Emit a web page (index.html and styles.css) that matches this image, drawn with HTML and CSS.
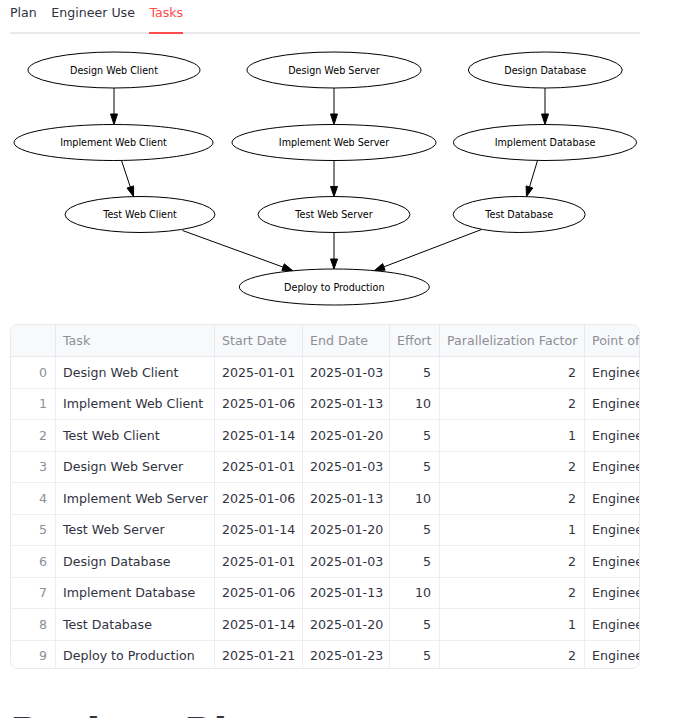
FILE: index.html
```html
<!DOCTYPE html>
<html>
<head>
<meta charset="utf-8">
<link rel="stylesheet" href="styles.css">
</head>
<body>
<div class="page">
  <div class="tabs">
    <div class="tab">Plan</div>
    <div class="tab">Engineer Use</div>
    <div class="tab active">Tasks</div>
  </div>

  <svg class="graph" width="630" height="290" viewBox="10 34 630 290" xmlns="http://www.w3.org/2000/svg">
    <g class="nodes">
      <ellipse cx="114" cy="70" rx="86" ry="18"/>
      <ellipse cx="334" cy="70" rx="87" ry="18"/>
      <ellipse cx="545.3" cy="70" rx="77" ry="18"/>
      <ellipse cx="113.5" cy="142.5" rx="99.5" ry="18"/>
      <ellipse cx="334" cy="142.5" rx="102" ry="18"/>
      <ellipse cx="545" cy="142.5" rx="91.5" ry="18"/>
      <ellipse cx="140" cy="214.5" rx="75" ry="18"/>
      <ellipse cx="334" cy="214.5" rx="76" ry="18"/>
      <ellipse cx="519.2" cy="214.5" rx="66" ry="18"/>
      <ellipse cx="334.3" cy="287" rx="95" ry="18"/>
    </g>
    <g class="edges">
      <line x1="114" y1="88" x2="114" y2="114"/>
      <polygon points="114,124.5 110.5,114 117.5,114"/>
      <line x1="334" y1="88" x2="334" y2="114"/>
      <polygon points="334,124.5 330.5,114 337.5,114"/>
      <line x1="545" y1="88" x2="545" y2="114"/>
      <polygon points="545,124.5 541.5,114 548.5,114"/>
      <line x1="121.5" y1="160.5" x2="130.3" y2="187"/>
      <polygon points="133.5,196.5 133.6,185.9 127,188.1"/>
      <line x1="334" y1="160.5" x2="334" y2="186.5"/>
      <polygon points="334,196.5 330.5,186.5 337.5,186.5"/>
      <line x1="537.5" y1="160.5" x2="529.5" y2="187"/>
      <polygon points="526.5,196.5 532.8,188 526.1,185.9"/>
      <line x1="182.5" y1="230.5" x2="283.1" y2="267.1"/>
      <polygon points="292.5,270.5 281.9,270.4 284.3,263.8"/>
      <line x1="334" y1="232.5" x2="334" y2="259"/>
      <polygon points="334,269 330.5,259 337.5,259"/>
      <line x1="481.5" y1="229.5" x2="383.8" y2="266.9"/>
      <polygon points="374.5,270.5 382.6,263.6 385.1,270.2"/>
    </g>
    <g class="labels">
      <text x="114" y="73.5">Design Web Client</text>
      <text x="334" y="73.5">Design Web Server</text>
      <text x="545.3" y="73.5">Design Database</text>
      <text x="113.5" y="146">Implement Web Client</text>
      <text x="334" y="146">Implement Web Server</text>
      <text x="545" y="146">Implement Database</text>
      <text x="140" y="218">Test Web Client</text>
      <text x="334" y="218">Test Web Server</text>
      <text x="519.2" y="218">Test Database</text>
      <text x="334.3" y="290.5">Deploy to Production</text>
    </g>
  </svg>

  <div class="frame">
    <div class="row head">
      <div class="cell idx"></div>
      <div class="cell">Task</div>
      <div class="cell">Start Date</div>
      <div class="cell">End Date</div>
      <div class="cell">Effort</div>
      <div class="cell">Parallelization Factor</div>
      <div class="cell">Point of Contact</div>
    </div>
    <div class="row"><div class="cell idx">0</div><div class="cell">Design Web Client</div><div class="cell">2025-01-01</div><div class="cell">2025-01-03</div><div class="cell num">5</div><div class="cell num">2</div><div class="cell">Engineer 1</div></div>
    <div class="row"><div class="cell idx">1</div><div class="cell">Implement Web Client</div><div class="cell">2025-01-06</div><div class="cell">2025-01-13</div><div class="cell num">10</div><div class="cell num">2</div><div class="cell">Engineer 1</div></div>
    <div class="row"><div class="cell idx">2</div><div class="cell">Test Web Client</div><div class="cell">2025-01-14</div><div class="cell">2025-01-20</div><div class="cell num">5</div><div class="cell num">1</div><div class="cell">Engineer 1</div></div>
    <div class="row"><div class="cell idx">3</div><div class="cell">Design Web Server</div><div class="cell">2025-01-01</div><div class="cell">2025-01-03</div><div class="cell num">5</div><div class="cell num">2</div><div class="cell">Engineer 2</div></div>
    <div class="row"><div class="cell idx">4</div><div class="cell">Implement Web Server</div><div class="cell">2025-01-06</div><div class="cell">2025-01-13</div><div class="cell num">10</div><div class="cell num">2</div><div class="cell">Engineer 2</div></div>
    <div class="row"><div class="cell idx">5</div><div class="cell">Test Web Server</div><div class="cell">2025-01-14</div><div class="cell">2025-01-20</div><div class="cell num">5</div><div class="cell num">1</div><div class="cell">Engineer 2</div></div>
    <div class="row"><div class="cell idx">6</div><div class="cell">Design Database</div><div class="cell">2025-01-01</div><div class="cell">2025-01-03</div><div class="cell num">5</div><div class="cell num">2</div><div class="cell">Engineer 3</div></div>
    <div class="row"><div class="cell idx">7</div><div class="cell">Implement Database</div><div class="cell">2025-01-06</div><div class="cell">2025-01-13</div><div class="cell num">10</div><div class="cell num">2</div><div class="cell">Engineer 3</div></div>
    <div class="row"><div class="cell idx">8</div><div class="cell">Test Database</div><div class="cell">2025-01-14</div><div class="cell">2025-01-20</div><div class="cell num">5</div><div class="cell num">1</div><div class="cell">Engineer 3</div></div>
    <div class="row"><div class="cell idx">9</div><div class="cell">Deploy to Production</div><div class="cell">2025-01-21</div><div class="cell">2025-01-23</div><div class="cell num">5</div><div class="cell num">2</div><div class="cell">Engineer 1</div></div>
  </div>

  <h1 class="title">Project Plan</h1>
</div>
</body>
</html>
```

FILE: styles.css
```css
html, body {
  margin: 0;
  padding: 0;
  background: #ffffff;
}

body {
  font-family: "DejaVu Sans", sans-serif;
  color: #31333f;
  overflow: hidden;
}

.page {
  width: 630px;
  padding: 0 10px;
}

.tabs {
  display: flex;
  gap: 14.5px;
  height: 32px;
  border-bottom: 2px solid #e8e9ec;
}

.tab {
  font-size: 12.6px;
  line-height: 16px;
  padding-top: 5px;
  color: #31333f;
  border-bottom: 2px solid transparent;
  margin-bottom: -2px;
  box-sizing: border-box;
  height: 34px;
}

.tab.active {
  color: #ff4b4b;
  border-bottom-color: #ff4b4b;
}

.graph {
  display: block;
}

.graph .nodes ellipse {
  fill: none;
  stroke: #000;
  stroke-width: 1;
}

.graph .edges line {
  stroke: #000;
  stroke-width: 1;
}

.graph .edges polygon {
  fill: #000;
  stroke: #000;
  stroke-width: 1;
}

.graph .labels text {
  font-family: "DejaVu Sans", sans-serif;
  font-size: 9.6px;
  text-anchor: middle;
  fill: #000;
}

.frame {
  width: 630px;
  height: 345px;
  box-sizing: border-box;
  border: 1px solid #e8e9ec;
  border-radius: 8px;
  overflow: hidden;
  font-size: 12.6px;
}

.row {
  display: grid;
  grid-template-columns: 45px 159px 88px 87px 50px 145px 160px;
  height: 31.5px;
  border-bottom: 1px solid #eeeef1;
  box-sizing: border-box;
  width: 734px;
}

.row.head {
  height: 32px;
  background: #f8f9fb;
  color: #8d8f98;
  border-bottom-color: #e8e9ec;
}

.cell {
  display: flex;
  align-items: center;
  padding: 0 7px;
  border-right: 1px solid #eeeef1;
  white-space: nowrap;
  overflow: hidden;
}

.head .cell {
  border-right-color: #e8e9ec;
}

.cell.idx {
  justify-content: flex-end;
  padding-right: 8px;
  color: #8d8f98;
  background: #ffffff;
}

.head .cell.idx {
  background: #f8f9fb;
}

.cell.num {
  justify-content: flex-end;
  padding-right: 8px;
}

.title {
  margin: 40px 0 0;
  font-size: 40px;
  line-height: 1.2;
  font-weight: 700;
  color: #31333f;
}
```
